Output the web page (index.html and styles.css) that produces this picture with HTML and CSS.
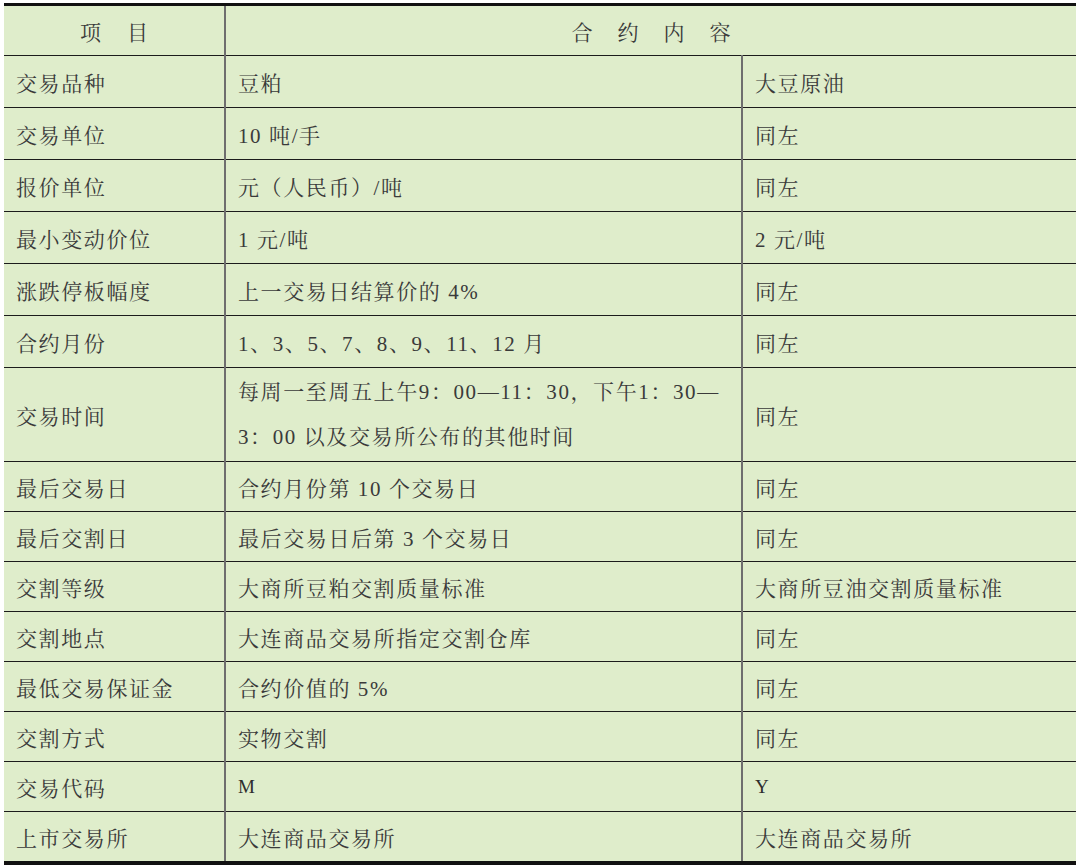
FILE: index.html
```html
<!DOCTYPE html>
<html lang="zh-CN">
<head>
<meta charset="utf-8">
<title>合约内容</title>
<link rel="stylesheet" href="styles.css">
</head>
<body>
<table class="spec">
  <colgroup>
    <col class="c1">
    <col class="c2">
    <col class="c3">
  </colgroup>
  <thead>
    <tr class="head">
      <th class="h1">项目</th>
      <th class="h2" colspan="2">合约内容</th>
    </tr>
  </thead>
  <tbody>
    <tr class="r52"><td>交易品种</td><td class="v">豆粕</td><td class="v">大豆原油</td></tr>
    <tr class="r52"><td>交易单位</td><td class="v">10 吨/手</td><td class="v">同左</td></tr>
    <tr class="r52"><td>报价单位</td><td class="v">元（人民币）/吨</td><td class="v">同左</td></tr>
    <tr class="r52"><td>最小变动价位</td><td class="v">1 元/吨</td><td class="v">2 元/吨</td></tr>
    <tr class="r52"><td>涨跌停板幅度</td><td class="v">上一交易日结算价的 4%</td><td class="v">同左</td></tr>
    <tr class="r52"><td>合约月份</td><td class="v">1、3、5、7、8、9、11、12 月</td><td class="v">同左</td></tr>
    <tr class="tall"><td>交易时间</td><td class="v multi">每周一至周五上午9：00—11：30，下午1：30—<br>3：00 以及交易所公布的其他时间</td><td class="v">同左</td></tr>
    <tr class="r50"><td>最后交易日</td><td class="v">合约月份第 10 个交易日</td><td class="v">同左</td></tr>
    <tr class="r50"><td>最后交割日</td><td class="v">最后交易日后第 3 个交易日</td><td class="v">同左</td></tr>
    <tr class="r50"><td>交割等级</td><td class="v">大商所豆粕交割质量标准</td><td class="v">大商所豆油交割质量标准</td></tr>
    <tr class="r50"><td>交割地点</td><td class="v">大连商品交易所指定交割仓库</td><td class="v">同左</td></tr>
    <tr class="r50"><td>最低交易保证金</td><td class="v">合约价值的 5%</td><td class="v">同左</td></tr>
    <tr class="r50"><td>交割方式</td><td class="v">实物交割</td><td class="v">同左</td></tr>
    <tr class="r50"><td>交易代码</td><td class="v code">M</td><td class="v code">Y</td></tr>
    <tr class="r50 last"><td>上市交易所</td><td class="v">大连商品交易所</td><td class="v">大连商品交易所</td></tr>
  </tbody>
</table>
</body>
</html>
```

FILE: styles.css
```css
html, body {
  margin: 0;
  padding: 0;
  background: #ffffff;
}

body {
  padding: 3px 4px 0 4px;
}

.spec {
  width: 1072px;
  border-collapse: collapse;
  table-layout: fixed;
  background: #dfedcb;
  color: #3a3a3a;
  font-family: "Liberation Serif", "Noto Serif CJK SC", "Noto Sans CJK SC", serif;
  font-size: 21px;
  letter-spacing: 1.6px;
  border-top: 3px solid #111111;
  border-bottom: 4px solid #111111;
}

.c1 { width: 221px; }
.c2 { width: 517px; }
.c3 { width: 334px; }

.spec th,
.spec td {
  padding: 0 8px 0 12px;
  text-align: left;
  vertical-align: middle;
  font-weight: normal;
  border-top: 1px solid #1c1c1c;
  white-space: nowrap;
}

.spec .v {
  border-left: 2px solid #6e6e6e;
  padding-left: 12px;
}

.head th {
  height: 49px;
  border-top: none;
  text-align: center;
}

.head .h1 {
  letter-spacing: 26px;
  padding: 0 0 0 26px;
}

.head .h2 {
  border-left: 2px solid #6e6e6e;
  letter-spacing: 25px;
  padding: 0 0 0 25px;
}

.r52 td { height: 51px; }
.r50 td { height: 49px; }

.tall td { height: 93px; }

.multi {
  line-height: 45px;
  padding-top: 1px;
  padding-bottom: 1px;
}

.code {
  font-size: 19px;
  font-weight: bold;
  color: #2e2e2e;
}
```
